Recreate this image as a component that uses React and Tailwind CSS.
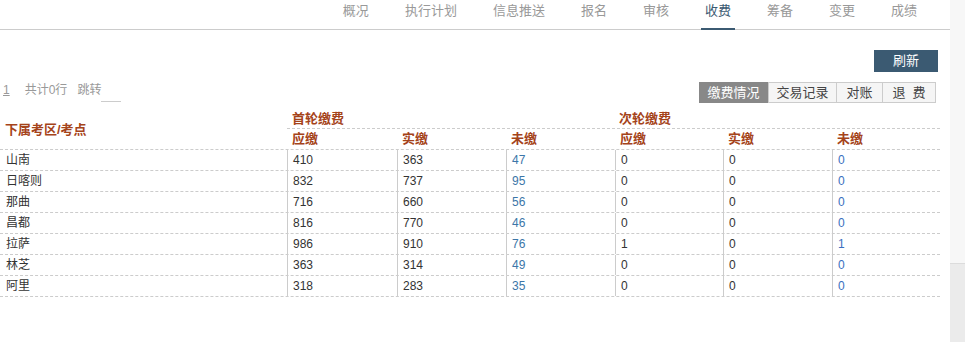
import React from 'react';

const tabs = ['概况', '执行计划', '信息推送', '报名', '审核', '收费', '筹备', '变更', '成绩'];

const rows = [
  ['山南', 410, 363, 47, 0, 0, 0],
  ['日喀则', 832, 737, 95, 0, 0, 0],
  ['那曲', 716, 660, 56, 0, 0, 0],
  ['昌都', 816, 770, 46, 0, 0, 0],
  ['拉萨', 986, 910, 76, 1, 0, 1],
  ['林芝', 363, 314, 49, 0, 0, 0],
  ['阿里', 318, 283, 35, 0, 0, 0],
];

const subHeads = ['应缴', '实缴', '未缴', '应缴', '实缴', '未缴'];

export default function App() {
  return (
    <div className="flex w-[965px] h-[342px] bg-white overflow-hidden font-['Liberation_Sans','Noto_Sans_CJK_SC',sans-serif]">
      <main className="w-[950px] shrink-0">
        {/* top tabs */}
        <nav className="h-[30px] border-b border-[#ccc] flex justify-end gap-[28px] pr-[29px] text-[13px]">
          {tabs.map((t) => (
            <div
              key={t}
              className={
                t === '收费'
                  ? 'h-[30px] -mb-px px-[4px] leading-[22px] border-b-2 border-[#3b5a72] text-[#3b5a72]'
                  : 'h-[30px] -mb-px px-[4px] leading-[22px] text-[#999]'
              }
            >
              {t}
            </div>
          ))}
        </nav>

        <div className="mt-[20px] flex justify-end pr-[12px]">
          <button className="w-[64px] h-[22px] bg-[#3b5a72] text-white text-[13px] leading-[22px]">刷新</button>
        </div>

        <div className="pt-[10px] flex justify-between items-start">
          <div className="flex items-start h-[20px] text-[12px] leading-[16px] text-[#999]">
            <span className="pl-[3px] underline">1</span>
            <span className="ml-[15px]">共计0行</span>
            <span className="ml-[10px]">跳转</span>
            <span className="w-[20px] h-[20px] border-b border-[#ccc]" />
          </div>
          <div className="flex pr-[14px] text-[13px] leading-[19px] text-center">
            <div className="w-[69px] h-[21px] leading-[21px] bg-[#888] text-white">缴费情况</div>
            <div className="w-[69px] h-[21px] border border-[#ccc] bg-[#f5f5f5] text-[#444]">交易记录</div>
            <div className="w-[46px] h-[21px] border border-l-0 border-[#ccc] bg-[#f5f5f5] text-[#444]">对账</div>
            <div className="w-[53px] h-[21px] border border-l-0 border-[#ccc] bg-[#f5f5f5] text-[#444] whitespace-pre">退  费</div>
          </div>
        </div>

        {/* table */}
        <div className="mt-[7px] w-[940px]">
          <div className="flex border-b border-dashed border-[#ccc] text-[13px] font-bold text-[#a5431a]">
            <div className="w-[287px] h-[39px] flex items-center pl-[5px]">下属考区/考点</div>
            <div className="flex-1">
              <div className="h-[19px] leading-[18px] border-b border-dashed border-[#ccc] grid grid-cols-[328px_325px]">
                <div className="pl-[5px]">首轮缴费</div>
                <div className="pl-[4px]">次轮缴费</div>
              </div>
              <div className="h-[20px] leading-[20px] grid grid-cols-[110px_109px_109px_108px_109px_108px]">
                {subHeads.map((h, i) => (
                  <div key={i} className="pl-[5px]">{h}</div>
                ))}
              </div>
            </div>
          </div>

          {rows.map((r) => (
            <div
              key={r[0]}
              className="grid grid-cols-[287px_110px_109px_109px_108px_109px_108px] h-[21px] border-b border-dashed border-[#ccc] text-[12px] leading-[20px] text-[#333]"
            >
              <div className="pl-[6px]">{r[0]}</div>
              {r.slice(1).map((v, i) => (
                <div
                  key={i}
                  className={
                    i === 2
                      ? 'border-l border-[#ccc] pl-[5px] text-[#3c76a8]'
                      : i === 5
                      ? 'border-l border-[#ccc] pl-[5px] text-[#3a6fc0]'
                      : 'border-l border-[#ccc] pl-[5px]'
                  }
                >
                  {v}
                </div>
              ))}
            </div>
          ))}
        </div>
      </main>

      {/* right scroll strip */}
      <div className="w-[15px] flex flex-col">
        <div className="h-[263px] bg-[#f7f7f7]" />
        <div className="flex-1 bg-[#ebebeb] border-t border-[#dcdcdc]" />
      </div>
    </div>
  );
}
